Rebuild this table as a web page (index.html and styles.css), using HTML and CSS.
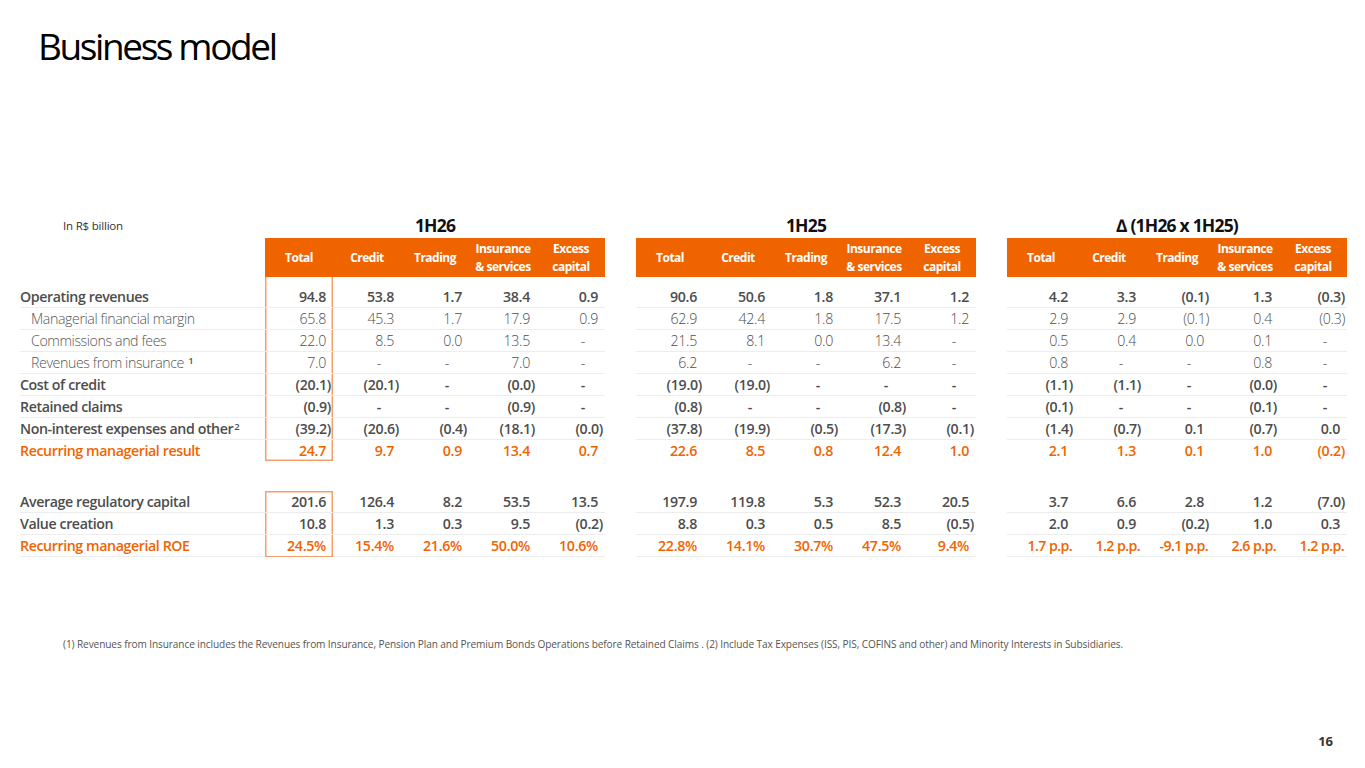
FILE: index.html
```html
<!DOCTYPE html>
<html lang="en">
<head>
<meta charset="utf-8">
<title>Business model</title>
<link rel="stylesheet" href="styles.css">
</head>
<body>
<div class="slide">
  <h1 class="title">Business model</h1>

  <div class="table">
    <div class="row caps">
      <div class="unit">In R$ billion</div>
      <div class="gt g1">1H26</div>
      <div class="gt g2">1H25</div>
      <div class="gt g3">∆ (1H26 x 1H25)</div>
    </div>

    <div class="row head">
      <div class="lab"></div>
      <div class="h">Total</div><div class="h">Credit</div><div class="h">Trading</div><div class="h">Insurance<br>&amp; services</div><div class="h">Excess<br>capital</div>
      <div class="sp"></div>
      <div class="h">Total</div><div class="h">Credit</div><div class="h">Trading</div><div class="h">Insurance<br>&amp; services</div><div class="h">Excess<br>capital</div>
      <div class="sp"></div>
      <div class="h">Total</div><div class="h">Credit</div><div class="h">Trading</div><div class="h">Insurance<br>&amp; services</div><div class="h">Excess<br>capital</div>
    </div>

    <div class="row body bold first">
      <div class="lab">Operating revenues</div>
      <div class="c tot">94.8</div><div class="c">53.8</div><div class="c">1.7</div><div class="c">38.4</div><div class="c">0.9</div>
      <div class="sp"></div>
      <div class="c">90.6</div><div class="c">50.6</div><div class="c">1.8</div><div class="c">37.1</div><div class="c">1.2</div>
      <div class="sp"></div>
      <div class="c">4.2</div><div class="c">3.3</div><div class="c neg">(0.1)</div><div class="c">1.3</div><div class="c neg">(0.3)</div>
    </div>

    <div class="row body light">
      <div class="lab ind">Managerial financial margin</div>
      <div class="c tot">65.8</div><div class="c">45.3</div><div class="c">1.7</div><div class="c">17.9</div><div class="c">0.9</div>
      <div class="sp"></div>
      <div class="c">62.9</div><div class="c">42.4</div><div class="c">1.8</div><div class="c">17.5</div><div class="c">1.2</div>
      <div class="sp"></div>
      <div class="c">2.9</div><div class="c">2.9</div><div class="c neg">(0.1)</div><div class="c">0.4</div><div class="c neg">(0.3)</div>
    </div>

    <div class="row body light">
      <div class="lab ind">Commissions and fees</div>
      <div class="c tot">22.0</div><div class="c">8.5</div><div class="c">0.0</div><div class="c">13.5</div><div class="c dash">-</div>
      <div class="sp"></div>
      <div class="c">21.5</div><div class="c">8.1</div><div class="c">0.0</div><div class="c">13.4</div><div class="c dash">-</div>
      <div class="sp"></div>
      <div class="c">0.5</div><div class="c">0.4</div><div class="c">0.0</div><div class="c">0.1</div><div class="c dash">-</div>
    </div>

    <div class="row body light">
      <div class="lab ind">Revenues from insurance&nbsp;<sup>1</sup></div>
      <div class="c tot">7.0</div><div class="c dash">-</div><div class="c dash">-</div><div class="c">7.0</div><div class="c dash">-</div>
      <div class="sp"></div>
      <div class="c">6.2</div><div class="c dash">-</div><div class="c dash">-</div><div class="c">6.2</div><div class="c dash">-</div>
      <div class="sp"></div>
      <div class="c">0.8</div><div class="c dash">-</div><div class="c dash">-</div><div class="c">0.8</div><div class="c dash">-</div>
    </div>

    <div class="row body bold">
      <div class="lab">Cost of credit</div>
      <div class="c tot neg">(20.1)</div><div class="c neg">(20.1)</div><div class="c dash">-</div><div class="c neg">(0.0)</div><div class="c dash">-</div>
      <div class="sp"></div>
      <div class="c neg">(19.0)</div><div class="c neg">(19.0)</div><div class="c dash">-</div><div class="c dash">-</div><div class="c dash">-</div>
      <div class="sp"></div>
      <div class="c neg">(1.1)</div><div class="c neg">(1.1)</div><div class="c dash">-</div><div class="c neg">(0.0)</div><div class="c dash">-</div>
    </div>

    <div class="row body bold">
      <div class="lab">Retained claims</div>
      <div class="c tot neg">(0.9)</div><div class="c dash">-</div><div class="c dash">-</div><div class="c neg">(0.9)</div><div class="c dash">-</div>
      <div class="sp"></div>
      <div class="c neg">(0.8)</div><div class="c dash">-</div><div class="c dash">-</div><div class="c neg">(0.8)</div><div class="c dash">-</div>
      <div class="sp"></div>
      <div class="c neg">(0.1)</div><div class="c dash">-</div><div class="c dash">-</div><div class="c neg">(0.1)</div><div class="c dash">-</div>
    </div>

    <div class="row body bold">
      <div class="lab">Non-interest expenses and other<sup>2</sup></div>
      <div class="c tot neg">(39.2)</div><div class="c neg">(20.6)</div><div class="c neg">(0.4)</div><div class="c neg">(18.1)</div><div class="c neg">(0.0)</div>
      <div class="sp"></div>
      <div class="c neg">(37.8)</div><div class="c neg">(19.9)</div><div class="c neg">(0.5)</div><div class="c neg">(17.3)</div><div class="c neg">(0.1)</div>
      <div class="sp"></div>
      <div class="c neg">(1.4)</div><div class="c neg">(0.7)</div><div class="c">0.1</div><div class="c neg">(0.7)</div><div class="c">0.0</div>
    </div>

    <div class="row body bold hl noline">
      <div class="lab">Recurring managerial result</div>
      <div class="c tot tot-end">24.7</div><div class="c">9.7</div><div class="c">0.9</div><div class="c">13.4</div><div class="c">0.7</div>
      <div class="sp"></div>
      <div class="c">22.6</div><div class="c">8.5</div><div class="c">0.8</div><div class="c">12.4</div><div class="c">1.0</div>
      <div class="sp"></div>
      <div class="c">2.1</div><div class="c">1.3</div><div class="c">0.1</div><div class="c">1.0</div><div class="c neg">(0.2)</div>
    </div>

    <div class="row body bold gap">
      <div class="lab">Average regulatory capital</div>
      <div class="c tot tot-start">201.6</div><div class="c">126.4</div><div class="c">8.2</div><div class="c">53.5</div><div class="c">13.5</div>
      <div class="sp"></div>
      <div class="c">197.9</div><div class="c">119.8</div><div class="c">5.3</div><div class="c">52.3</div><div class="c">20.5</div>
      <div class="sp"></div>
      <div class="c">3.7</div><div class="c">6.6</div><div class="c">2.8</div><div class="c">1.2</div><div class="c neg">(7.0)</div>
    </div>

    <div class="row body bold">
      <div class="lab">Value creation</div>
      <div class="c tot">10.8</div><div class="c">1.3</div><div class="c">0.3</div><div class="c">9.5</div><div class="c neg">(0.2)</div>
      <div class="sp"></div>
      <div class="c">8.8</div><div class="c">0.3</div><div class="c">0.5</div><div class="c">8.5</div><div class="c neg">(0.5)</div>
      <div class="sp"></div>
      <div class="c">2.0</div><div class="c">0.9</div><div class="c neg">(0.2)</div><div class="c">1.0</div><div class="c">0.3</div>
    </div>

    <div class="row body bold hl">
      <div class="lab">Recurring managerial ROE</div>
      <div class="c tot tot-last">24.5%</div><div class="c">15.4%</div><div class="c">21.6%</div><div class="c">50.0%</div><div class="c">10.6%</div>
      <div class="sp"></div>
      <div class="c">22.8%</div><div class="c">14.1%</div><div class="c">30.7%</div><div class="c">47.5%</div><div class="c">9.4%</div>
      <div class="sp"></div>
      <div class="c pp">1.7 p.p.</div><div class="c pp">1.2 p.p.</div><div class="c pp">-9.1 p.p.</div><div class="c pp">2.6 p.p.</div><div class="c pp">1.2 p.p.</div>
    </div>
  </div>

  <p class="foot">(1) Revenues from Insurance includes the Revenues from Insurance, Pension Plan and Premium Bonds Operations before Retained Claims . (2) Include Tax Expenses (ISS, PIS, COFINS and other) and Minority Interests in Subsidiaries.</p>

  <div class="pager"><span class="pageno">16</span></div>
</div>
</body>
</html>
```

FILE: styles.css
```css
* { box-sizing: border-box; }

html, body {
  margin: 0;
  padding: 0;
  background: #ffffff;
}

body {
  font-family: "Open Sans", "Noto Sans", sans-serif;
  color: #4d4d4d;
}

.slide {
  width: 1365px;
  height: 768px;
  overflow: hidden;
}

.title {
  margin: 0;
  padding: 28px 0 0 38px;
  font-size: 37px;
  line-height: 36px;
  font-weight: 400;
  letter-spacing: -2.4px;
  color: #000000;
}

.table {
  margin-top: 148px;
  margin-left: 20px;
}

.row {
  display: grid;
  grid-template-columns: 245px repeat(5, 68px) 31px repeat(5, 68px) 31px repeat(5, 68px);
}

/* caption row */
.caps {
  height: 26px;
  align-items: center;
}
.unit {
  padding-left: 43px;
  font-size: 11.5px;
  font-weight: 400;
  color: #333;
  letter-spacing: -0.2px;
}
.gt {
  text-align: center;
  font-size: 17.5px;
  font-weight: 700;
  color: #111;
  letter-spacing: -0.8px;
}
.g1 { grid-column: 2 / span 5; }
.g2 { grid-column: 8 / span 5; }
.g3 { grid-column: 14 / span 5; }

/* header bar */
.head {
  height: 39px;
}
.head .h {
  background: #f06400;
  color: #ffffff;
  font-size: 12px;
  font-weight: 700;
  line-height: 18px;
  letter-spacing: -0.5px;
  text-align: center;
  display: flex;
  align-items: center;
  justify-content: center;
}

/* body rows */
.body {
  height: 22px;
  font-size: 14.2px;
}
.body > div {
  display: flex;
  align-items: center;
  height: 22px;
  white-space: nowrap;
}
.body > .lab,
.body > .c {
  border-bottom: 1px solid #ededed;
}
.body.noline > .lab,
.body.noline > .c {
  border-bottom-color: transparent;
}
.body.first,
.body.first > div {
  height: 31px;
}
.body.first > div {
  padding-top: 9px;
}
.body.gap {
  margin-top: 29px;
}

.lab {
  letter-spacing: -0.4px;
  color: #4d4d4d;
}
.lab.ind {
  padding-left: 11px;
}
.lab sup {
  font-size: 9.5px;
  font-weight: 600;
  line-height: 0;
  position: relative;
  top: -2px;
  margin-left: 1px;
}

.bold { font-weight: 600; }
.light { font-weight: 300; }
.light .lab { color: #555; }

.c {
  justify-content: flex-end;
  padding-right: 7px;
  letter-spacing: -0.3px;
}
.c.neg { padding-right: 2px; }
.c.dash { padding-right: 20px; }
.c.pp { padding-right: 3px; letter-spacing: -0.6px; }

.hl,
.hl .lab { color: #f06400; }

/* outlined total column */
.tot {
  box-shadow: inset 1.5px 0 0 #f3a06c, inset -1.5px 0 0 #f3a06c;
}
.tot.tot-end {
  box-shadow: inset 1.5px 0 0 #f3a06c, inset -1.5px 0 0 #f3a06c, inset 0 -1.5px 0 #f3a06c;
}
.tot.tot-start {
  box-shadow: inset 1.5px 0 0 #f3a06c, inset -1.5px 0 0 #f3a06c, inset 0 1.5px 0 #f3a06c;
}
.body > .tot.tot-last {
  border-bottom: 1.5px solid #f3a06c;
}

/* footnote and page number */
.foot {
  margin: 81px 0 0 63px;
  font-size: 10.1px;
  line-height: 12px;
  color: #555;
  letter-spacing: -0.1px;
}

.pager {
  display: flex;
  justify-content: flex-end;
  padding-right: 32px;
  margin-top: 83px;
}
.pageno {
  font-size: 13px;
  line-height: 16px;
  font-weight: 700;
  color: #333;
}
```
